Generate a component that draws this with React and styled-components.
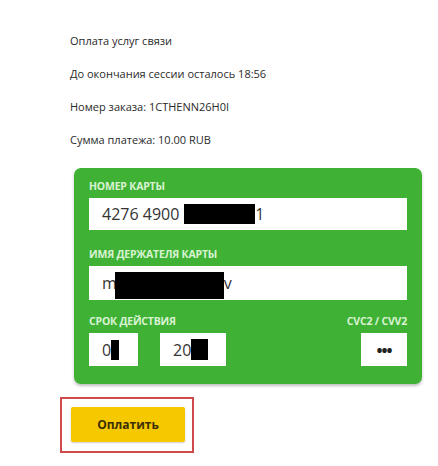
import React from "react";
import styled, { createGlobalStyle } from "styled-components";

const GlobalStyle = createGlobalStyle`
  body {
    margin: 0;
    background: #ffffff;
    font-family: "Open Sans", "Liberation Sans", sans-serif;
  }
`;

const Page = styled.div`
  width: 438px;
  height: 466px;
  padding: 24px 0 0 70px;
  box-sizing: border-box;
`;

const InfoLine = styled.div`
  font-size: 11px;
  line-height: 33px;
  height: 33px;
  color: #2a2a2a;
`;

const Card = styled.div`
  width: 348px;
  box-sizing: border-box;
  margin: 12px 0 0 4px;
  padding: 9px 15px 18px 15px;
  background: #3fb236;
  border-radius: 7px;
  box-shadow: 0 2px 3px rgba(0, 0, 0, 0.25);
`;

const Label = styled.div`
  font-size: 10.5px;
  font-weight: 700;
  line-height: 18px;
  height: 18px;
  color: #d9f2d2;
  text-transform: uppercase;
  letter-spacing: -0.2px;
  margin-top: ${(p) => p.mt || 0}px;
  display: flex;
  justify-content: space-between;
`;

const Field = styled.div`
  margin-top: 3px;
  height: ${(p) => p.h || 32}px;
  width: ${(p) => (p.w ? `${p.w}px` : "100%")};
  box-sizing: border-box;
  background: #ffffff;
  display: flex;
  align-items: center;
  justify-content: ${(p) => (p.center ? "center" : "flex-start")};
  padding: 0 ${(p) => (p.center ? 0 : 13)}px;
  font-size: 16px;
  color: #333;
`;

const Hidden = styled.span`
  display: inline-block;
  width: ${(p) => p.w}px;
  height: ${(p) => p.h}px;
  background: #000;
  margin: ${(p) => p.m || "0"};
`;

const Row = styled.div`
  display: flex;
  align-items: flex-start;
`;

const Spacer = styled.div`
  flex: 1;
`;

const Dots = styled.span`
  font-size: 16px;
  font-weight: 700;
  letter-spacing: -1px;
  color: #222;
`;

const Highlight = styled.div`
  margin-top: 13px;
  margin-left: -10px;
  width: 134px;
  height: 56px;
  box-sizing: border-box;
  border: 2px solid #cf4b4b;
  padding: 8px 9px 9px 9px;
`;

const PayButton = styled.button`
  width: 114px;
  height: 35px;
  border: none;
  border-radius: 2px;
  background: #f6c800;
  box-shadow: 0 1px 2px rgba(0, 0, 0, 0.2);
  font-family: "Open Sans", "Liberation Sans", sans-serif;
  font-size: 12px;
  font-weight: 700;
  color: #3a3000;
  padding: 0;
`;

export default function App() {
  return (
    <>
      <GlobalStyle />
      <Page>
        <InfoLine>Оплата услуг связи</InfoLine>
        <InfoLine>До окончания сессии осталось 18:56</InfoLine>
        <InfoLine>Номер заказа: 1CTHENN26H0I</InfoLine>
        <InfoLine>Сумма платежа: 10.00 RUB</InfoLine>
        <Card>
          <Label>Номер карты</Label>
          <Field>
            4276 4900 <Hidden w={71} h={20} m="0 0 0 5px" />1
          </Field>
          <Label mt={15}>Имя держателя карты</Label>
          <Field h={34}>
            m<Hidden w={109} h={27} m="4px 0 0 -2px" />v
          </Field>
          <Label mt={12}>
            <span>Срок действия</span>
            <span>CVC2 / CVV2</span>
          </Label>
          <Row>
            <Field w={49} h={33}>
              0<Hidden w={8} h={20} />
            </Field>
            <Field w={66} h={33} style={{ marginLeft: 22 }}>
              20<Hidden w={17} h={21} />
            </Field>
            <Spacer />
            <Field w={46} h={33} center>
              <Dots>•••</Dots>
            </Field>
          </Row>
        </Card>
        <Highlight>
          <PayButton>Оплатить</PayButton>
        </Highlight>
      </Page>
    </>
  );
}
